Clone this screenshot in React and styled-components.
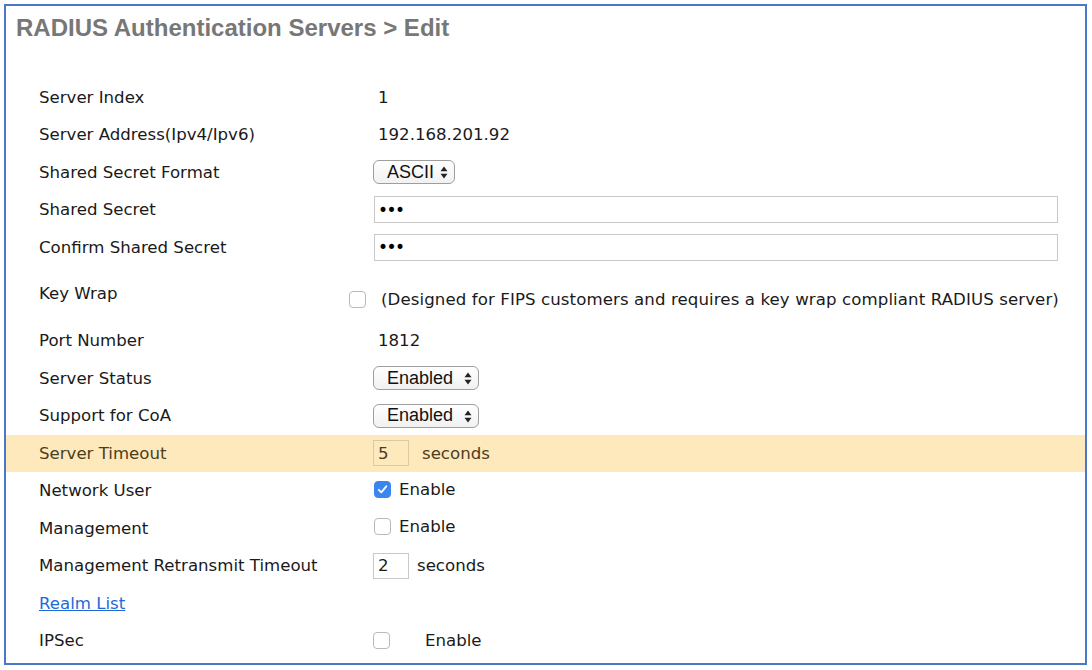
import React from "react";
import styled, { createGlobalStyle } from "styled-components";

const GlobalStyle = createGlobalStyle`
  body {
    margin: 0;
    background: #fff;
    font-family: "DejaVu Sans", Verdana, sans-serif;
  }
`;

const Frame = styled.div`
  margin: 4px;
  width: 1079px;
  height: 657px;
  border: 2px solid #4a78c8;
  overflow: hidden;
`;

const Title = styled.h1`
  margin: 0;
  padding: 8px 0 0 10px;
  height: 60px;
  box-sizing: border-box;
  font-family: "Liberation Sans", Arial, sans-serif;
  font-weight: bold;
  font-size: 24px;
  color: #777;
`;

const Form = styled.div`
  display: flex;
  flex-direction: column;
  padding-top: 12.25px;
`;

const Row = styled.div`
  display: grid;
  grid-template-columns: 334px 1fr;
  align-items: center;
  height: ${(p) => p.$h || 37.5}px;
  padding-left: 33px;
  background: ${(p) => (p.$highlight ? "#fde9bb" : "transparent")};
  color: ${(p) => (p.$highlight ? "#4d3d1e" : "#1a1a1a")};
  font-size: 16.6px;
`;

const Label = styled.div`
  white-space: nowrap;
`;

const Value = styled.div`
  display: flex;
  align-items: center;
  white-space: nowrap;
  padding-left: ${(p) => p.$indent || 0}px;
  margin-top: ${(p) => p.$shift || 0}px;
  margin-left: ${(p) => p.$pull || 0}px;
`;

const Note = styled.span`
  letter-spacing: 0.1px;
`;

const SelectBox = styled.div`
  position: relative;
  display: inline-flex;
  align-items: center;
  width: ${(p) => p.$w}px;
  height: 24px;
  box-sizing: border-box;
  border: 1px solid #9e9e9e;
  border-radius: 6px;
  background: linear-gradient(#ffffff, #f1f1f1);
  padding-left: 13px;
  font-family: "Liberation Sans", Arial, sans-serif;
  font-size: 18px;
  color: #111;
`;

const Arrows = styled.svg`
  position: absolute;
  right: 6px;
  top: 5px;
`;

const TextInput = styled.input`
  width: 684px;
  height: 27px;
  margin-left: 1px;
  box-sizing: border-box;
  border: 1px solid #c9c9c9;
  padding: 0 3px;
  font-size: 17px;
  font-family: "DejaVu Sans", Verdana, sans-serif;
  letter-spacing: -1.5px;
  color: #000;
  outline: none;
`;

const SmallInput = styled.input`
  width: 36px;
  height: 26px;
  box-sizing: border-box;
  border: 1px solid ${(p) => (p.$highlight ? "#dcc9a0" : "#c9c9c9")};
  background: ${(p) => (p.$highlight ? "#fde9bb" : "#fff")};
  color: inherit;
  padding: 0 4px;
  font-size: 16.6px;
  font-family: "DejaVu Sans", Verdana, sans-serif;
  outline: none;
`;

const Unit = styled.span`
  margin-left: ${(p) => p.$gap || 13}px;
`;

const Check = styled.span`
  display: inline-flex;
  align-items: center;
  justify-content: center;
  width: 17px;
  height: 17px;
  box-sizing: border-box;
  border-radius: 4px;
  border: 1px solid ${(p) => (p.$on ? "#3a86f0" : "#b9b9b9")};
  background: ${(p) => (p.$on ? "#3a86f0" : "#fff")};
  margin-left: ${(p) => p.$ml || 0}px;
  margin-right: ${(p) => p.$mr || 8}px;
  flex-shrink: 0;
`;

const RealmLink = styled.a`
  color: #1d6ad6;
  text-decoration: underline;
  cursor: pointer;
`;

function Select({ w, children }) {
  return (
    <SelectBox $w={w}>
      {children}
      <Arrows width="8" height="13" viewBox="0 0 8 13">
        <path d="M4 0.5 L7.5 5.2 H0.5 Z" fill="#222" />
        <path d="M4 12.5 L7.5 7.8 H0.5 Z" fill="#222" />
      </Arrows>
    </SelectBox>
  );
}

function CheckBox({ on, ml, mr }) {
  return (
    <Check $on={on} $ml={ml} $mr={mr}>
      {on && (
        <svg width="11" height="11" viewBox="0 0 11 11">
          <path
            d="M1.8 5.8 L4.3 8.3 L9.3 2.3"
            stroke="#fff"
            strokeWidth="1.8"
            fill="none"
            strokeLinecap="round"
            strokeLinejoin="round"
          />
        </svg>
      )}
    </Check>
  );
}

export default function App() {
  return (
    <>
      <GlobalStyle />
      <Frame>
        <Title>RADIUS Authentication Servers &gt; Edit</Title>
        <Form>
          <Row>
            <Label>Server Index</Label>
            <Value $indent={5}>1</Value>
          </Row>
          <Row>
            <Label>Server Address(Ipv4/Ipv6)</Label>
            <Value $indent={5}>192.168.201.92</Value>
          </Row>
          <Row>
            <Label>Shared Secret Format</Label>
            <Value>
              <Select w={82}>ASCII</Select>
            </Value>
          </Row>
          <Row>
            <Label>Shared Secret</Label>
            <Value>
              <TextInput type="password" defaultValue="abc" />
            </Value>
          </Row>
          <Row>
            <Label>Confirm Shared Secret</Label>
            <Value>
              <TextInput type="password" defaultValue="abc" />
            </Value>
          </Row>
          <Row $h={56.25}>
            <Label>Key Wrap</Label>
            <Value $shift={12} $pull={-24}>
              <CheckBox mr={15} />
              <Note>
                (Designed for FIPS customers and requires a key wrap compliant RADIUS server)
              </Note>
            </Value>
          </Row>
          <Row>
            <Label>Port Number</Label>
            <Value $indent={5}>1812</Value>
          </Row>
          <Row>
            <Label>Server Status</Label>
            <Value>
              <Select w={106}>Enabled</Select>
            </Value>
          </Row>
          <Row>
            <Label>Support for CoA</Label>
            <Value>
              <Select w={106}>Enabled</Select>
            </Value>
          </Row>
          <Row $highlight>
            <Label>Server Timeout</Label>
            <Value>
              <SmallInput $highlight defaultValue="5" />
              <Unit>seconds</Unit>
            </Value>
          </Row>
          <Row>
            <Label>Network User</Label>
            <Value $shift={-3}>
              <CheckBox on ml={1} />
              Enable
            </Value>
          </Row>
          <Row>
            <Label>Management</Label>
            <Value $shift={-3}>
              <CheckBox ml={1} />
              Enable
            </Value>
          </Row>
          <Row>
            <Label>Management Retransmit Timeout</Label>
            <Value>
              <SmallInput defaultValue="2" />
              <Unit $gap={8}>seconds</Unit>
            </Value>
          </Row>
          <Row>
            <Label>
              <RealmLink>Realm List</RealmLink>
            </Label>
            <Value />
          </Row>
          <Row>
            <Label>IPSec</Label>
            <Value>
              <CheckBox mr={35} />
              Enable
            </Value>
          </Row>
        </Form>
      </Frame>
    </>
  );
}
